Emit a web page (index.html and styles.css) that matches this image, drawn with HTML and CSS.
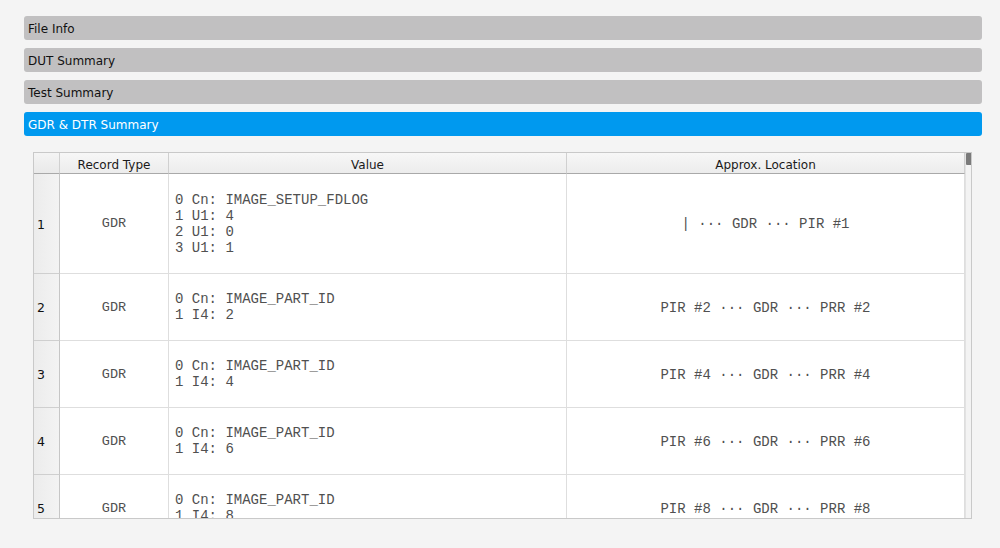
FILE: index.html
```html
<!DOCTYPE html>
<html>
<head>
<meta charset="utf-8">
<link rel="stylesheet" href="styles.css">
</head>
<body>
<div class="page">
  <div class="bar">File Info</div>
  <div class="bar">DUT Summary</div>
  <div class="bar">Test Summary</div>
  <div class="bar active">GDR &amp; DTR Summary</div>

  <div class="table-wrap">
    <div class="table">
      <div class="row head">
        <div class="cell corner"></div>
        <div class="cell hcell">Record Type</div>
        <div class="cell hcell">Value</div>
        <div class="cell hcell">Approx. Location</div>
      </div>
      <div class="row r1">
        <div class="cell rh">1</div>
        <div class="cell type">GDR</div>
        <div class="cell val">0 Cn: IMAGE_SETUP_FDLOG<br>1 U1: 4<br>2 U1: 0<br>3 U1: 1</div>
        <div class="cell loc">| ··· GDR ··· PIR #1</div>
      </div>
      <div class="row">
        <div class="cell rh">2</div>
        <div class="cell type">GDR</div>
        <div class="cell val">0 Cn: IMAGE_PART_ID<br>1 I4: 2</div>
        <div class="cell loc">PIR #2 ··· GDR ··· PRR #2</div>
      </div>
      <div class="row">
        <div class="cell rh">3</div>
        <div class="cell type">GDR</div>
        <div class="cell val">0 Cn: IMAGE_PART_ID<br>1 I4: 4</div>
        <div class="cell loc">PIR #4 ··· GDR ··· PRR #4</div>
      </div>
      <div class="row">
        <div class="cell rh">4</div>
        <div class="cell type">GDR</div>
        <div class="cell val">0 Cn: IMAGE_PART_ID<br>1 I4: 6</div>
        <div class="cell loc">PIR #6 ··· GDR ··· PRR #6</div>
      </div>
      <div class="row">
        <div class="cell rh">5</div>
        <div class="cell type">GDR</div>
        <div class="cell val">0 Cn: IMAGE_PART_ID<br>1 I4: 8</div>
        <div class="cell loc">PIR #8 ··· GDR ··· PRR #8</div>
      </div>
    </div>
    <div class="scrollbar"><div class="thumb"></div></div>
  </div>
</div>
</body>
</html>
```

FILE: styles.css
```css
html, body {
  margin: 0;
  padding: 0;
  background: #f4f4f4;
  overflow: hidden;
}

.page {
  padding: 16px 18px 0 24px;
  display: flex;
  flex-direction: column;
  gap: 8px;
  font-family: "DejaVu Sans", Verdana, sans-serif;
}

.bar {
  height: 24px;
  line-height: 26px;
  padding-left: 4px;
  background: #c1c0c1;
  border-radius: 3px;
  font-size: 12px;
  color: #111;
}

.bar.active {
  background: #0099ef;
  color: #fff;
}

.table-wrap {
  margin: 8px 10px 0 9px;
  height: 365px;
  border: 1px solid #c9c9c9;
  background: #fff;
  display: flex;
  overflow: hidden;
}

.table {
  width: 931px;
  display: flex;
  flex-direction: column;
}

.row {
  display: grid;
  grid-template-columns: 26px 109px 398px 398px;
  height: 67px;
  flex: none;
}

.row.r1 {
  height: 100px;
}

.row.head {
  height: 21px;
}

.cell {
  box-sizing: border-box;
  border-right: 1px solid #dedede;
  border-bottom: 1px solid #dedede;
  display: flex;
  align-items: center;
  font-family: "Liberation Mono", "Courier New", monospace;
  font-size: 14px;
  line-height: 16px;
  color: #505050;
}

.head .cell {
  height: 21px;
  background: linear-gradient(#f7f7f7, #ececec);
  border-bottom: 1px solid #a9a9a9;
  border-right: 1px solid #d0d0d0;
  font-family: "DejaVu Sans", Verdana, sans-serif;
  font-size: 12px;
  color: #1a1a1a;
  justify-content: center;
  align-items: flex-start;
  line-height: 14px;
  padding-top: 5px;
}

.head .corner {
  background: linear-gradient(#f4f4f4, #e9e9e9);
}

.cell.rh {
  background: linear-gradient(90deg, #ececec, #f3f3f3);
  border-right: 1px solid #c6c6c6;
  border-bottom: 1px solid #cfcfcf;
  font-family: "DejaVu Sans", Verdana, sans-serif;
  font-size: 12.5px;
  color: #111;
  padding-left: 3px;
  padding-top: 2px;
}

.cell.type,
.cell.loc {
  justify-content: center;
}

.cell.type {
  font-size: 13.5px;
  padding-top: 1px;
}

.cell.val {
  padding-left: 6px;
}

.loc {
  padding-top: 1px;
}

.scrollbar {
  width: 6px;
  flex: none;
  background: #f3f3f3;
  border-left: 1px solid #e2e2e2;
}

.thumb {
  height: 12px;
  background: #7a7a7a;
  border-radius: 1px;
}
```
